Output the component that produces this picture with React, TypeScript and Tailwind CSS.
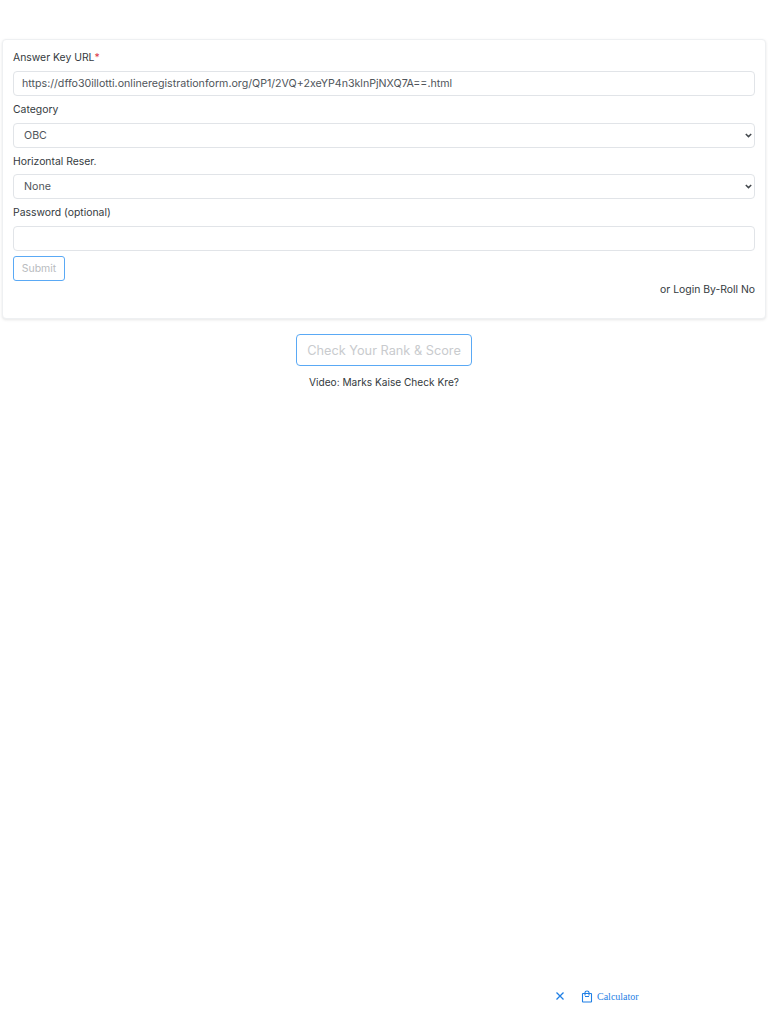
import React from 'react';

const font = { fontFamily: 'Inter, sans-serif' };

const inputClass =
  'block w-full h-[25px] rounded-[4px] border border-[#e1e4e8] bg-white px-2 text-[10.65px] text-[#4f555b] outline-none';

const Label: React.FC<{ children: React.ReactNode }> = ({ children }) => (
  <label className="flex h-[26.75px] items-start pt-[6px] text-[10.4px] leading-[15px] text-[#343a40]">{children}</label>
);

const Select: React.FC<{ value: string }> = ({ value }) => (
  <div className="relative">
    <select className={`${inputClass} appearance-none pl-[10px] pt-[1px]`} defaultValue={value}>
      <option>{value}</option>
    </select>
    <svg
      className="pointer-events-none absolute right-[3px] top-[10px]"
      width="7"
      height="5"
      viewBox="0 0 7 5"
      fill="none"
      stroke="#43484d"
      strokeWidth="1.5"
    >
      <path d="M.8 1l2.7 2.6L6.2 1" />
    </svg>
  </div>
);

const App: React.FC = () => {
  return (
    <div className="min-h-[1024px] bg-white" style={font}>
      <div className="px-[2px] pt-[39px]">
        {/* Answer key form */}
        <div className="h-[280px] rounded-[4px] border border-[#eef0f2] bg-white px-[10px] pt-[4px] shadow-[0_1px_3px_rgba(0,0,0,0.1)]">
          <Label>
            Answer Key URL<span className="text-[#dc3545]">*</span>
          </Label>
          <input
            className={inputClass}
            defaultValue="https://dffo30illotti.onlineregistrationform.org/QP1/2VQ+2xeYP4n3klnPjNXQ7A==.html"
          />
          <Label>Category</Label>
          <Select value="OBC" />
          <Label>Horizontal Reser.</Label>
          <Select value="None" />
          <Label>Password (optional)</Label>
          <input className={inputClass} type="password" />
          <button className="mt-[5px] block h-[25px] w-[52px] rounded-[3px] border border-[#5aa9f5] text-[10.5px] text-[#b9bcc0]">
            Submit
          </button>
          <div className="mt-[1px] text-right text-[10.4px] leading-[16px] text-[#343a40]">or Login By-Roll No</div>
        </div>

        <div className="mt-[15px] flex flex-col items-center">
          <button className="h-[32px] w-[176px] rounded-[4px] border border-[#5aa9f5] pt-[1px] text-[12.75px] text-[#c9cbce]">
            Check Your Rank &amp; Score
          </button>
          <div className="mt-[8px] text-[10.15px] leading-[16px] text-[#343a40]">Video: Marks Kaise Check Kre?</div>
        </div>
      </div>

      {/* Calculator widget */}
      <div className="absolute left-[555px] top-[988px] flex h-[16px] items-center text-[#1f7fe5]">
        <svg width="10" height="10" viewBox="0 0 10 10" fill="none" stroke="currentColor" strokeWidth="1.3">
          <path d="M1.5 1.5l7 7M8.5 1.5l-7 7" />
        </svg>
        <svg className="ml-[16px]" width="12" height="13" viewBox="0 0 12 13" fill="none" stroke="currentColor" strokeWidth="1.1">
          <path d="M2 3.5h8a.5.5 0 0 1 .5.5v7.5a.5.5 0 0 1-.5.5H2a.5.5 0 0 1-.5-.5V4a.5.5 0 0 1 .5-.5z" />
          <path d="M4 5.5V2.5a2 1.5 0 0 1 4 0v3M4 6.5h4" />
        </svg>
        <span className="ml-[4px] text-[10px]" style={{ fontFamily: '"Liberation Serif", serif' }}>
          Calculator
        </span>
      </div>
    </div>
  );
};

export default App;
